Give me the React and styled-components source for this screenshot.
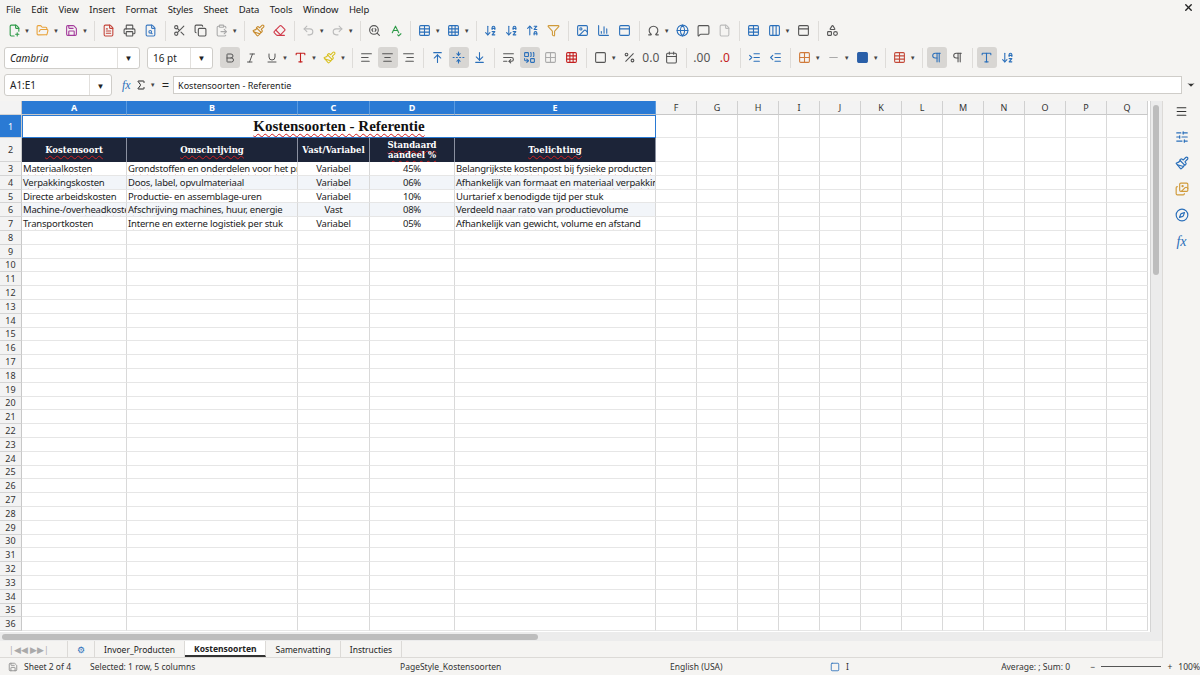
import React from 'react';
import styled, { createGlobalStyle } from 'styled-components';
import {
  FilePlus2, FolderOpen, Save, FileText, Printer, FileSearch, Scissors, Copy, ClipboardPaste,
  Paintbrush, Eraser, Undo2, Redo2, SearchCode, SpellCheck, Table, Grid3x3, ArrowDownAZ,
  ArrowUpZA, Filter, Image, BarChart3, Omega, Globe, MessageSquare, File, Columns3, PanelTop,
  Shapes, Bold, Italic, Underline, AlignLeft, AlignCenter, AlignRight, ArrowUpToLine,
  FoldVertical, ArrowDownToLine, WrapText, Combine, Square, Percent, Calendar, IndentIncrease,
  IndentDecrease, Grid2x2, Minus, Pilcrow, Menu, Sigma, SlidersHorizontal, Type, Images, Compass, X, ChevronDown,
} from 'lucide-react';

const GlobalStyle = createGlobalStyle`
  body { margin: 0; font-family: "Noto Sans", "Open Sans", sans-serif; background: #f5f4f2; color: #222; }
  * { box-sizing: border-box; }
`;

const Page = styled.div`
  width: 1200px; height: 675px; display: flex; flex-direction: column; overflow: hidden; font-size: 10px;
`;

const MenuBar = styled.div`
  height: 18px; display: flex; align-items: center; padding: 0 6px; gap: 10.5px; font-size: 9.5px; letter-spacing: -0.1px;
  span:last-child { margin-left: auto; }
`;

const ToolRow = styled.div`
  height: ${p => p.$h}px; display: flex; align-items: center; padding: 0 4px; gap: 1px;
`;

const Btn = styled.div`
  width: ${p => p.$w || 20}px; height: 21px; display: flex; align-items: center; justify-content: center;
  border-radius: 3px; background: ${p => (p.$on ? '#d8d6d3' : 'transparent')}; color: ${p => p.$c || '#555'};
  font-size: 12px;
`;

const Drop = styled.span`
  font-size: 6px; color: #444; margin: 0 2px 0 -1px;
`;

const Sep = styled.div`
  width: 1px; height: 20px; background: #dedcd9; margin: 0 3px;
`;

const Combo = styled.div`
  width: ${p => p.$w}px; height: 22px; background: #fff; border: 1px solid #cfcdc9; border-radius: 3px;
  display: flex; align-items: center; font-size: 10px; font-style: ${p => (p.$i ? 'italic' : 'normal')};
  padding-left: 5px; margin-right: 6px;
  span { flex: 1; }
  b { width: 22px; height: 100%; border-left: 1px solid #e2e0dd; display: flex; align-items: center; justify-content: center; font-size: 8px; font-weight: normal; font-style: normal; }
`;

const FormulaBar = styled.div`
  height: 26px; display: flex; align-items: center; padding: 0 4px; gap: 4px;
`;

const FormulaInput = styled.div`
  flex: 1; height: 18px; background: #fff; border: 1px solid #cfcdc9; display: flex; align-items: center;
  padding-left: 4px; font-size: 9px;
`;

const Main = styled.div`
  flex: 1; display: flex; min-height: 0; margin-top: 3px;
`;

const SheetArea = styled.div`
  flex: 1; display: flex; flex-direction: column; min-width: 0; background: #fff;
`;

const GridWrap = styled.div`
  flex: 1; display: flex; min-height: 0; overflow: hidden;
`;

const Grid = styled.div`
  flex: 1; display: flex; flex-direction: column; overflow: hidden;
`;

const Row = styled.div`
  display: flex; height: ${p => p.$h}px; flex-shrink: 0;
`;

const RowHead = styled.div`
  width: 22px; flex-shrink: 0; display: flex; align-items: center; justify-content: center; font-size: 9px;
  background: ${p => (p.$sel ? '#2a7ad4' : '#f3f3f3')}; color: ${p => (p.$sel ? '#fff' : '#333')};
  border-right: 1px solid #c8c8c8; border-bottom: 1px solid #d4d4d4;
`;

const ColHead = styled.div`
  width: ${p => p.$w}px; flex-shrink: 0; display: flex; align-items: center; justify-content: center;
  font-size: 9px; font-weight: ${p => (p.$sel ? 700 : 400)};
  background: ${p => (p.$sel ? '#2a7ad4' : '#f3f3f3')}; color: ${p => (p.$sel ? '#fff' : '#333')};
  border-right: 1px solid ${p => (p.$sel ? '#5a9be0' : '#d0d0d0')}; border-bottom: 1px solid #c8c8c8;
`;

const Cell = styled.div`
  width: ${p => p.$w}px; flex-shrink: 0; border-right: 1px solid #d9d9d9; border-bottom: 1px solid #e6e6e6;
  white-space: nowrap; overflow: hidden; font-size: 9.5px; padding: 0 1px; line-height: 13px;
  text-align: ${p => (p.$center ? 'center' : 'left')}; letter-spacing: -0.2px;
  background: ${p => (p.$band ? '#f2f5f9' : '#fff')};
`;

const HeadCell = styled.div`
  width: ${p => p.$w}px; flex-shrink: 0; background: #1c2438; color: #fff; border-right: 1px solid #8a90a0;
  display: flex; align-items: center; justify-content: center; text-align: center; line-height: 10px;
  font-family: "DejaVu Serif", "Liberation Serif", serif; font-weight: 700; font-size: 8.5px;
`;

const TitleCell = styled.div`
  width: 634px; flex-shrink: 0; border: 1px solid #2a7ad4; display: flex; align-items: center; justify-content: center;
  font-family: "Liberation Serif", "DejaVu Serif", serif; font-weight: 700; font-size: 15px; color: #111;
`;

const Spell = styled.span`
  text-decoration: underline wavy #d02020; text-decoration-thickness: 1px; text-underline-offset: 2px;
`;

const VScroll = styled.div`
  width: 12px; background: #ececec; border-left: 1px solid #d4d4d4; padding: 2px; display: flex;
  div { width: 6px; height: 170px; background: #bdbdbd; border-radius: 3px; margin-top: 2px; }
`;

const HScroll = styled.div`
  height: 9px; background: #ececec; display: flex; align-items: center; padding: 0 2px;
  div { width: 536px; height: 6px; background: #bdbdbd; border-radius: 3px; }
`;

const Tabs = styled.div`
  height: 17px; background: #f5f4f2; display: flex; align-items: center; font-size: 8.5px; border-bottom: 1px solid #dcdad7;
`;

const Tab = styled.div`
  padding: 0 9px; height: 100%; display: flex; align-items: center; border-right: 1px solid #dcdad7;
  font-weight: ${p => (p.$on ? 700 : 400)}; background: ${p => (p.$on ? '#fff' : 'transparent')};
  border-bottom: ${p => (p.$on ? '2px solid #333' : 'none')};
`;

const Status = styled.div`
  height: 17px; display: flex; align-items: center; font-size: 8.5px; color: #333; background: #f5f4f2;
`;

const StatusItem = styled.div`
  width: ${p => p.$w}px; padding-left: ${p => p.$pl || 0}px; display: flex; align-items: center; gap: 6px;
  justify-content: ${p => p.$j || 'flex-start'};
`;

const Sidebar = styled.div`
  width: 38px; display: flex; flex-direction: column; align-items: center; padding-top: 4px; gap: 12px;
  border-left: 1px solid #dcdad7; color: #2a6fba; background: #f5f4f2;
`;

const cols = [
  ['A', 105], ['B', 171], ['C', 72], ['D', 85], ['E', 201],
  ['F', 41], ['G', 41], ['H', 41], ['I', 41], ['J', 41], ['K', 41], ['L', 41], ['M', 41], ['N', 41], ['O', 41], ['P', 41], ['Q', 41],
];
const extra = cols.slice(5);

const S = ({ t }) => <Spell>{t}</Spell>;

const data = [
  [<S t="Materiaalkosten" />, <><S t="Grondstoffen" /> en <S t="onderdelen voor het" /> product</>, <S t="Variabel" />, '45%', <><S t="Belangrijkste kostenpost bij fysieke producten" /></>],
  [<S t="Verpakkingskosten" />, <><S t="Doos" />, label, <S t="opvulmateriaal" /></>, <S t="Variabel" />, '06%', <><S t="Afhankelijk" /> van <S t="formaat" /> en <S t="materiaal verpakking" /></>],
  [<S t="Directe arbeidskosten" />, <><S t="Productie" />- en <S t="assemblage-uren" /></>, <S t="Variabel" />, '10%', <><S t="Uurtarief" /> x <S t="benodigde tijd" /> per <S t="stuk" /></>],
  [<>Machine-/<S t="overheadkosten" /></>, <><S t="Afschrijving" /> machines, <S t="huur" />, <S t="energie" /></>, 'Vast', '08%', <><S t="Verdeeld naar rato" /> van <S t="productievolume" /></>],
  [<S t="Transportkosten" />, <><S t="Interne" /> en <S t="externe logistiek" /> per <S t="stuk" /></>, <S t="Variabel" />, '05%', <><S t="Afhankelijk" /> van <S t="gewicht" />, volume en <S t="afstand" /></>],
];

const Emp = ({ n }) => (
  <Row $h={13.8}>
    <RowHead>{n}</RowHead>
    {cols.map(([c, w]) => <Cell key={c} $w={w} />)}
  </Row>
);

const I = 13;

export default function App() {
  return (
    <Page>
      <GlobalStyle />
      <MenuBar>
        {['File', 'Edit', 'View', 'Insert', 'Format', 'Styles', 'Sheet', 'Data', 'Tools', 'Window', 'Help'].map(m => <span key={m}>{m}</span>)}
        <span><X size={11} strokeWidth={3} /></span>
      </MenuBar>
      <ToolRow $h={25}>
        <Btn $c="#2e9a48"><FilePlus2 size={I} /></Btn><Drop>▼</Drop>
        <Btn $c="#e8a23a"><FolderOpen size={I} /></Btn><Drop>▼</Drop>
        <Btn $c="#a43c9c"><Save size={I} /></Btn><Drop>▼</Drop><Sep />
        <Btn $c="#c4443a"><FileText size={I} /></Btn>
        <Btn><Printer size={I} /></Btn>
        <Btn $c="#3a78c0"><FileSearch size={I} /></Btn><Sep />
        <Btn><Scissors size={I} /></Btn>
        <Btn><Copy size={I} /></Btn>
        <Btn $c="#aaa"><ClipboardPaste size={I} /></Btn><Drop>▼</Drop><Sep />
        <Btn $c="#c78a2a"><Paintbrush size={I} /></Btn>
        <Btn $c="#d03a4a"><Eraser size={I} /></Btn><Sep />
        <Btn $c="#bbb"><Undo2 size={I} /></Btn><Drop>▼</Drop>
        <Btn $c="#bbb"><Redo2 size={I} /></Btn><Drop>▼</Drop><Sep />
        <Btn><SearchCode size={I} /></Btn>
        <Btn $c="#2e9a48"><SpellCheck size={I} /></Btn><Sep />
        <Btn $c="#2a6fba"><Table size={I} /></Btn><Drop>▼</Drop>
        <Btn $c="#2a6fba"><Grid3x3 size={I} /></Btn><Drop>▼</Drop><Sep />
        <Btn $c="#2a6fba"><ArrowDownAZ size={I} /></Btn>
        <Btn $c="#2a6fba"><ArrowDownAZ size={I} /></Btn>
        <Btn $c="#2a6fba"><ArrowUpZA size={I} /></Btn>
        <Btn $c="#d09a3a"><Filter size={I} /></Btn><Sep />
        <Btn $c="#2a6fba"><Image size={I} /></Btn>
        <Btn $c="#2a6fba"><BarChart3 size={I} /></Btn>
        <Btn $c="#2a6fba"><PanelTop size={I} /></Btn><Sep />
        <Btn><Omega size={I} /></Btn><Drop>▼</Drop>
        <Btn $c="#2a6fba"><Globe size={I} /></Btn>
        <Btn><MessageSquare size={I} /></Btn>
        <Btn $c="#bbb"><File size={I} /></Btn><Sep />
        <Btn $c="#2a6fba"><Table size={I} /></Btn>
        <Btn $c="#2a6fba"><Columns3 size={I} /></Btn><Drop>▼</Drop>
        <Btn><PanelTop size={I} /></Btn><Sep />
        <Btn><Shapes size={I} /></Btn>
      </ToolRow>
      <ToolRow $h={29}>
        <Combo $w={136} $i><span>Cambria</span><b>▼</b></Combo>
        <Combo $w={66}><span>16 pt</span><b>▼</b></Combo>
        <Btn $on><Bold size={12} /></Btn>
        <Btn><Italic size={12} /></Btn>
        <Btn><Underline size={12} /></Btn><Drop>▼</Drop>
        <Btn $c="#c42020"><Type size={I} /></Btn><Drop>▼</Drop>
        <Btn $c="#d8c020"><Paintbrush size={I} /></Btn><Drop>▼</Drop><Sep />
        <Btn><AlignLeft size={I} /></Btn>
        <Btn $on><AlignCenter size={I} /></Btn>
        <Btn><AlignRight size={I} /></Btn><Sep />
        <Btn $c="#2a6fba"><ArrowUpToLine size={I} /></Btn>
        <Btn $on $c="#2a6fba"><FoldVertical size={I} /></Btn>
        <Btn $c="#2a6fba"><ArrowDownToLine size={I} /></Btn><Sep />
        <Btn><WrapText size={I} /></Btn>
        <Btn $on $c="#2a6fba"><Combine size={I} /></Btn>
        <Btn $c="#aaa"><Grid2x2 size={I} /></Btn>
        <Btn $c="#c42020"><Grid3x3 size={I} /></Btn><Sep />
        <Btn><Square size={I} /></Btn><Drop>▼</Drop>
        <Btn><Percent size={I} /></Btn>
        <Btn $w={20}>0.0</Btn>
        <Btn><Calendar size={I} /></Btn><Sep />
        <Btn $w={22}>.00</Btn>
        <Btn $w={22} $c="#c42020">.0</Btn><Sep />
        <Btn $c="#2a6fba"><IndentIncrease size={I} /></Btn>
        <Btn $c="#2a6fba"><IndentDecrease size={I} /></Btn><Sep />
        <Btn $c="#d07a3a"><Grid2x2 size={I} /></Btn><Drop>▼</Drop>
        <Btn $c="#aaa"><Minus size={I} /></Btn><Drop>▼</Drop>
        <Btn $c="#2a5fa8"><Square size={I} fill="#2a5fa8" /></Btn><Drop>▼</Drop><Sep />
        <Btn $c="#c44a3a"><Table size={I} /></Btn><Drop>▼</Drop><Sep />
        <Btn $on $c="#2a6fba"><Pilcrow size={I} /></Btn>
        <Btn><Pilcrow size={I} /></Btn><Sep />
        <Btn $on $c="#2a6fba"><Type size={I} /></Btn>
        <Btn $c="#2a6fba"><ArrowDownAZ size={I} /></Btn>
      </ToolRow>
      <FormulaBar>
        <Combo $w={108}><span>A1:E1</span><b>▼</b></Combo>
        <span style={{ color: '#2a6fba', fontStyle: 'italic', fontFamily: 'Liberation Serif, serif', fontSize: 12 }}>fx</span>
        <Sigma size={12} /><Drop>▼</Drop>
        <span style={{ fontSize: 13 }}>=</span>
        <FormulaInput>Kostensoorten - Referentie</FormulaInput>
        <ChevronDown size={10} fill="#333" />
      </FormulaBar>
      <Main>
        <SheetArea>
          <GridWrap>
            <Grid>
              <Row $h={14}>
                <RowHead />
                {cols.map(([c, w], i) => <ColHead key={c} $w={w} $sel={i < 5}>{c}</ColHead>)}
              </Row>
              <Row $h={23}>
                <RowHead $sel>1</RowHead>
                <TitleCell><Spell>Kostensoorten - Referentie</Spell></TitleCell>
                {extra.map(([c, w]) => <Cell key={c} $w={w} />)}
              </Row>
              <Row $h={24}>
                <RowHead>2</RowHead>
                <HeadCell $w={105}><Spell>Kostensoort</Spell></HeadCell>
                <HeadCell $w={171}><Spell>Omschrijving</Spell></HeadCell>
                <HeadCell $w={72}>Vast/Variabel</HeadCell>
                <HeadCell $w={85}><Spell>Standaard aandeel %</Spell></HeadCell>
                <HeadCell $w={201}><Spell>Toelichting</Spell></HeadCell>
                {extra.map(([c, w]) => <Cell key={c} $w={w} />)}
              </Row>
              {data.map((r, i) => (
                <Row $h={13.8} key={i}>
                  <RowHead>{i + 3}</RowHead>
                  {r.map((v, j) => (
                    <Cell key={j} $w={cols[j][1]} $center={j === 2 || j === 3} $band={i % 2 === 1}>{v}</Cell>
                  ))}
                  {extra.map(([c, w]) => <Cell key={c} $w={w} />)}
                </Row>
              ))}
              {Array.from({ length: 29 }, (_, k) => <Emp key={k} n={k + 8} />)}
            </Grid>
            <VScroll><div /></VScroll>
          </GridWrap>
          <HScroll><div /></HScroll>
          <Tabs>
            <Tab style={{ color: '#aaa', width: 68 }}>|◀◀ ▶▶|</Tab>
            <Tab style={{ color: '#2a6fba' }}>⚙</Tab>
            <Tab>Invoer_Producten</Tab>
            <Tab $on>Kostensoorten</Tab>
            <Tab>Samenvatting</Tab>
            <Tab>Instructies</Tab>
          </Tabs>
        </SheetArea>
        <Sidebar>
          <Menu size={13} color="#333" />
          <SlidersHorizontal size={14} />
          <Paintbrush size={14} />
          <Images size={14} color="#d09a3a" />
          <Compass size={14} />
          <span style={{ fontStyle: 'italic', fontFamily: 'Liberation Serif, serif', fontSize: 14 }}>fx</span>
        </Sidebar>
      </Main>
      <Status>
        <StatusItem $w={90} $pl={8}><Save size={10} color="#888" />Sheet 2 of 4</StatusItem>
        <StatusItem $w={310} $pl={0}>Selected: 1 row, 5 columns</StatusItem>
        <StatusItem $w={270}>PageStyle_Kostensoorten</StatusItem>
        <StatusItem $w={160}>English (USA)</StatusItem>
        <StatusItem $w={120}><Square size={10} color="#2a6fba" />I</StatusItem>
        <StatusItem $w={120} $j="flex-end">Average: ; Sum: 0</StatusItem>
        <StatusItem $w={130} $j="flex-end">
          <span>−</span><span style={{ width: 60, height: 1, background: '#555' }} /><span>+</span><span>100%</span>
        </StatusItem>
      </Status>
    </Page>
  );
}
